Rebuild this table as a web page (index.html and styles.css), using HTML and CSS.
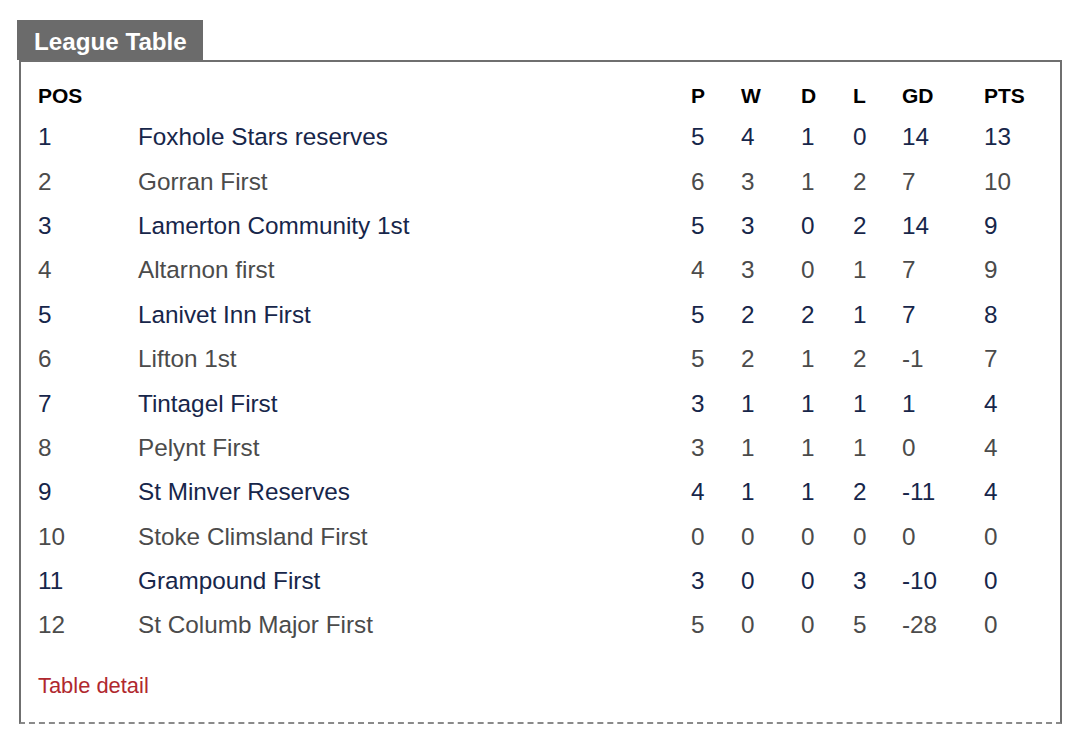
FILE: index.html
```html
<!DOCTYPE html>
<html lang="en">
<head>
<meta charset="utf-8">
<title>League Table</title>
<link rel="stylesheet" href="styles.css">
</head>
<body>
<div class="widget">
  <div class="tab">League Table</div>
  <div class="box">
    <div class="table">
      <div class="row head"><span>POS</span><span></span><span>P</span><span>W</span><span>D</span><span>L</span><span>GD</span><span>PTS</span></div>
      <div class="row odd"><span>1</span><span>Foxhole Stars reserves</span><span>5</span><span>4</span><span>1</span><span>0</span><span>14</span><span>13</span></div>
      <div class="row even"><span>2</span><span>Gorran First</span><span>6</span><span>3</span><span>1</span><span>2</span><span>7</span><span>10</span></div>
      <div class="row odd"><span>3</span><span>Lamerton Community 1st</span><span>5</span><span>3</span><span>0</span><span>2</span><span>14</span><span>9</span></div>
      <div class="row even"><span>4</span><span>Altarnon first</span><span>4</span><span>3</span><span>0</span><span>1</span><span>7</span><span>9</span></div>
      <div class="row odd"><span>5</span><span>Lanivet Inn First</span><span>5</span><span>2</span><span>2</span><span>1</span><span>7</span><span>8</span></div>
      <div class="row even"><span>6</span><span>Lifton 1st</span><span>5</span><span>2</span><span>1</span><span>2</span><span>-1</span><span>7</span></div>
      <div class="row odd"><span>7</span><span>Tintagel First</span><span>3</span><span>1</span><span>1</span><span>1</span><span>1</span><span>4</span></div>
      <div class="row even"><span>8</span><span>Pelynt First</span><span>3</span><span>1</span><span>1</span><span>1</span><span>0</span><span>4</span></div>
      <div class="row odd"><span>9</span><span>St Minver Reserves</span><span>4</span><span>1</span><span>1</span><span>2</span><span>-11</span><span>4</span></div>
      <div class="row even"><span>10</span><span>Stoke Climsland First</span><span>0</span><span>0</span><span>0</span><span>0</span><span>0</span><span>0</span></div>
      <div class="row odd"><span>11</span><span>Grampound First</span><span>3</span><span>0</span><span>0</span><span>3</span><span>-10</span><span>0</span></div>
      <div class="row even"><span>12</span><span>St Columb Major First</span><span>5</span><span>0</span><span>0</span><span>5</span><span>-28</span><span>0</span></div>
    </div>
    <a class="detail" href="#">Table detail</a>
  </div>
</div>
</body>
</html>
```

FILE: styles.css
```css
html, body {
  margin: 0;
  padding: 0;
  background: #ffffff;
}

body {
  font-family: "Liberation Sans", Arial, Helvetica, sans-serif;
}

.widget {
  padding: 20px 0 0 17px;
  width: 1045px;
}

.tab {
  display: inline-block;
  background: #6b6b6b;
  color: #ffffff;
  font-weight: bold;
  font-size: 24.2px;
  line-height: 37px;
  height: 37px;
  padding: 3px 16px 0 17px;
  width: 153px;
}

.box {
  margin-left: 2px;
  border-top: 2px solid #6f6f6f;
  border-left: 2px solid #6f6f6f;
  border-right: 2px solid #6f6f6f;
  border-bottom: 2px dashed #8a8a8a;
  height: 664px;
  padding: 15px 0 0 17px;
  box-sizing: border-box;
}

.row {
  display: grid;
  grid-template-columns: 100px 553px 50px 60px 52px 49px 82px auto;
  align-items: center;
  height: 44.4px;
  font-size: 24.3px;
}

.row.head {
  height: 38px;
  font-size: 21px;
  font-weight: bold;
  color: #000000;
}

.row.odd {
  color: #17264a;
}

.row.even {
  color: #4b4b4b;
}

.detail {
  display: block;
  margin-top: 25px;
  color: #b0282e;
  font-size: 21.9px;
  text-decoration: none;
}
```
